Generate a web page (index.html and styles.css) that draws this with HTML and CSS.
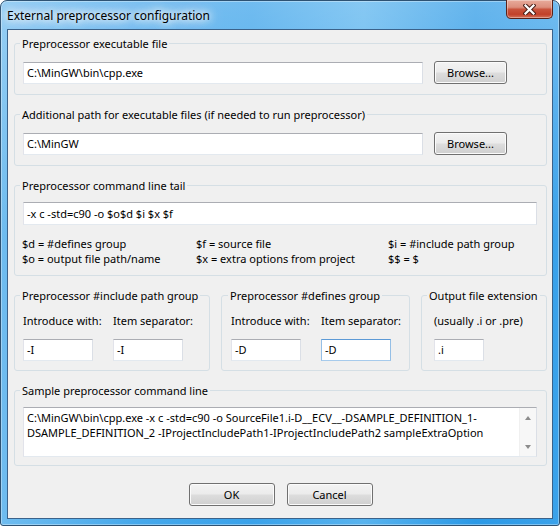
FILE: index.html
```html
<!DOCTYPE html>
<html>
<head>
<meta charset="utf-8">
<title>External preprocessor configuration</title>
<link rel="stylesheet" href="styles.css">
</head>
<body>
<div class="window">
  <div class="titlebar">
    <span class="title">External preprocessor configuration</span>
    <div class="close">
      <svg width="13" height="11" viewBox="0 0 13 11">
        <path d="M2.5 1.5L10.5 9.5M10.5 1.5L2.5 9.5" stroke="#4a2019" stroke-width="4.2" stroke-linecap="square"/>
        <path d="M2.5 1.5L10.5 9.5M10.5 1.5L2.5 9.5" stroke="#ffffff" stroke-width="2.2" stroke-linecap="square"/>
      </svg>
    </div>
  </div>
  <div class="client">
    <fieldset class="group path-group">
      <legend>Preprocessor executable file</legend>
      <div class="path-row">
        <div class="textbox path">C:\MinGW\bin\cpp.exe</div>
        <div class="button browse">Browse...</div>
      </div>
    </fieldset>
    <fieldset class="group path-group">
      <legend>Additional path for executable files (if needed to run preprocessor)</legend>
      <div class="path-row">
        <div class="textbox path">C:\MinGW</div>
        <div class="button browse">Browse...</div>
      </div>
    </fieldset>
    <fieldset class="group tail">
      <legend>Preprocessor command line tail</legend>
      <div class="textbox full">-x c -std=c90 -o $o$d $i $x $f</div>
      <div class="help">
        <span>$d = #defines group</span>
        <span>$f = source file</span>
        <span>$i = #include path group</span>
        <span>$o = output file path/name</span>
        <span>$x = extra options from project</span>
        <span>$$ = $</span>
      </div>
    </fieldset>
    <div class="groups-row">
      <fieldset class="group small inc">
        <legend>Preprocessor #include path group</legend>
        <div class="pair">
          <span class="lbl">Introduce with:</span>
          <span class="lbl">Item separator:</span>
          <div class="textbox short">-I</div>
          <div class="textbox short">-I</div>
        </div>
      </fieldset>
      <fieldset class="group small defs">
        <legend>Preprocessor #defines group</legend>
        <div class="pair">
          <span class="lbl">Introduce with:</span>
          <span class="lbl">Item separator:</span>
          <div class="textbox short">-D</div>
          <div class="textbox short focused">-D</div>
        </div>
      </fieldset>
      <fieldset class="group small ext">
        <legend>Output file extension</legend>
        <div class="lbl">(usually .i or .pre)</div>
        <div class="textbox tiny">.i</div>
      </fieldset>
    </div>
    <fieldset class="group sample">
      <legend>Sample preprocessor command line</legend>
      <div class="textarea">
        <div class="ta-text">C:\MinGW\bin\cpp.exe -x c -std=c90 -o SourceFile1.i-D__ECV__-DSAMPLE_DEFINITION_1-<br>DSAMPLE_DEFINITION_2 -IProjectIncludePath1-IProjectIncludePath2 sampleExtraOption</div>
        <div class="scrollbar">
          <span class="arrow up"></span>
          <span class="arrow down"></span>
        </div>
      </div>
    </fieldset>
    <div class="buttons">
      <div class="button dlg">OK</div>
      <div class="button dlg">Cancel</div>
    </div>
  </div>
</div>
</body>
</html>
```
FILE: styles.css
```css
* { box-sizing: border-box; }
html, body { margin: 0; padding: 0; }
body {
  width: 560px;
  height: 526px;
  overflow: hidden;
  background: #ffffff;
  font-family: "Noto Sans", "Open Sans", sans-serif;
  font-size: 11px;
  color: #000;
}
.window {
  width: 560px;
  height: 526px;
  border: 1px solid #2d5273;
  border-radius: 7px 7px 3px 3px;
  padding: 0 6px 6px 6px;
  display: flex;
  flex-direction: column;
  background:
    linear-gradient(to bottom, rgba(255,255,255,0.28), rgba(255,255,255,0) 45%),
    linear-gradient(to right, #6fbcef 0%, #45a8eb 25%, #3aa2ea 45%, #58b3ee 65%, #2b99e6 85%, #3ba2ea 100%);
  box-shadow: inset 0 0 0 1px rgba(255,255,255,0.35);
}
.titlebar {
  height: 28px;
  flex: none;
  display: flex;
  justify-content: space-between;
  align-items: flex-start;
}
.title {
  margin-top: 7px;
  font-size: 12px;
  line-height: 15px;
  color: #000;
  text-shadow: 0 0 6px #fff, 0 0 10px #fff, 0 0 14px rgba(255,255,255,0.9), 0 0 18px rgba(255,255,255,0.8);
}
.close {
  width: 47px;
  height: 19px;
  margin-top: -1px;
  border: 1px solid #5a2219;
  border-top: none;
  border-radius: 0 0 5px 5px;
  background: linear-gradient(to bottom, #e8ab9b 0%, #dc8f7d 40%, #c9533c 52%, #c2412a 80%, #d4725a 100%);
  box-shadow: inset 0 0 0 1px rgba(255,255,255,0.35);
  display: flex;
  align-items: center;
  justify-content: center;
}
.client {
  flex: 1;
  border: 1px solid #3b628a;
  background: #f0f0f0;
  padding: 6px 5px 0 6px;
  display: flex;
  flex-direction: column;
}
.group {
  margin: 0;
  border: 1px solid #d5dfe5;
  border-radius: 3px;
  min-width: 0;
}
.group legend {
  padding: 0 2px;
  margin-left: -3px;
  line-height: 15px;
  white-space: nowrap;
}
.client > .group + .group,
.client > .groups-row,
.client > .groups-row + .group { margin-top: 12px; }
.path-group { padding: 11px 9px 10px 8px; }
.path-row { display: flex; align-items: flex-start; }
.textbox {
  background: #fff;
  border: 1px solid;
  border-color: #abadb3 #dbdfe6 #e3e9ef #e2e3ea;
  padding: 0 3px;
  height: 22px;
  line-height: 20px;
  white-space: nowrap;
  overflow: hidden;
}
.textbox.path { width: 400px; }
.textbox.focused { border-color: #5c9ad6 #95bfe6 #a7cbec #95bfe6; }
.button {
  height: 23px;
  border: 1px solid #707070;
  border-radius: 3px;
  background: linear-gradient(to bottom, #f3f3f3 0%, #ebebeb 48%, #dddddd 52%, #cfcfcf 100%);
  box-shadow: inset 0 0 0 1px #fbfbfb;
  text-align: center;
  line-height: 21px;
}
.browse { width: 73px; margin-left: 11px; margin-top: -1px; }
.tail { padding: 9px 9px 9px 8px; }
.textbox.full { height: 23px; line-height: 21px; }
.help {
  margin-top: 11px;
  margin-left: -1px;
  display: grid;
  grid-template-columns: 174px 192px 1fr;
  line-height: 15px;
  white-space: nowrap;
}
.groups-row { display: flex; gap: 11px; align-items: stretch; }
.small { padding: 10px 8px 9px 8px; }
.inc { width: 196px; flex: none; }
.defs { width: 189px; flex: none; padding-left: 9px; }
.ext { flex: 1; padding-left: 12px; }
.ext legend { margin-left: -7px; }
.pair {
  display: grid;
  grid-template-columns: 90px 90px;
  row-gap: 11px;
}
.lbl { line-height: 15px; white-space: nowrap; }
.textbox.short { width: 70px; }
.textbox.tiny { width: 50px; margin-top: 11px; }
.sample { padding: 9px 9px 8px 8px; }
.textarea {
  height: 50px;
  display: flex;
  background: #fff;
  border: 1px solid;
  border-color: #abadb3 #dbdfe6 #e3e9ef #e2e3ea;
}
.ta-text {
  flex: 1;
  padding: 2px 3px;
  line-height: 15px;
  white-space: nowrap;
  overflow: hidden;
}
.scrollbar {
  width: 17px;
  flex: none;
  background: #f7f7f7;
  border-left: 1px solid #f0f0f0;
  display: flex;
  flex-direction: column;
  justify-content: space-between;
  align-items: center;
  padding: 8px 0 7px 0;
}
.arrow { width: 0; height: 0; border-left: 3.5px solid transparent; border-right: 3.5px solid transparent; }
.arrow.up { border-bottom: 4px solid #8c8c8c; }
.arrow.down { border-top: 4px solid #8c8c8c; }
.buttons {
  margin-top: 17px;
  display: flex;
  justify-content: center;
  gap: 12px;
}
.dlg { width: 86px; }
```
